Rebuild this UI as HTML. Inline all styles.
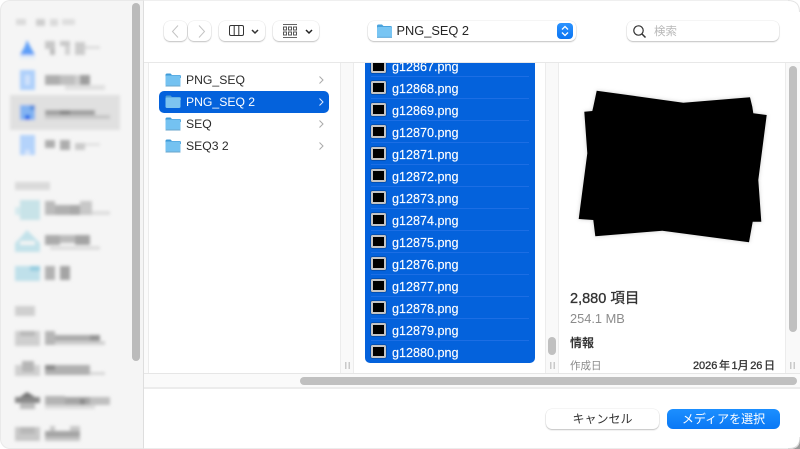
<!DOCTYPE html>
<html lang="ja"><head><meta charset="utf-8"><style>
html,body{margin:0;padding:0;background:#fff}
body{width:800px;height:449px;overflow:hidden;position:relative;font-family:"Liberation Sans","Noto Sans CJK JP",sans-serif;color:#2b2b2b}
.a{position:absolute}
.t{position:absolute;white-space:nowrap;line-height:16px;font-size:12px}
.btn{position:absolute;background:#fff;border-radius:6px;box-shadow:0 0 0 .5px rgba(0,0,0,.07),0 1px 1.5px rgba(0,0,0,.22)}
.f{position:absolute;left:371px;width:15px;height:13px;box-sizing:border-box;background:#000;border:2px solid #c4c4c4;border-radius:1.5px;box-shadow:0 0 0 .5px rgba(0,0,0,.4)}
.n{position:absolute;left:392px;color:#fff;font-size:12.6px;line-height:16px;white-space:nowrap;-webkit-text-stroke:.15px #fff}
.s{position:absolute;left:371px;width:158px;height:1px;background:#1c6ee4}
</style></head><body>
<div class="a" style="left:0;top:0;width:144px;height:449px;background:#f5f5f5;border-radius:10px 0 0 10px;box-sizing:border-box;border:1px solid #e9e9e9;border-right:1px solid #dedede"></div>

<svg class="a" style="left:0;top:0" width="132" height="449" viewBox="0 0 132 449">
<defs><filter id="b" x="-5%" y="-5%" width="110%" height="110%"><feGaussianBlur stdDeviation="1.6"/></filter></defs>
<g filter="url(#b)">
<rect x="10" y="95" width="110" height="35" fill="#e0e0e0"/>
<g fill="#dadada"><rect x="16" y="19" width="10" height="6"/><rect x="36" y="19" width="9" height="7" fill="#cecece"/><rect x="50" y="19" width="8" height="7"/><rect x="62" y="19" width="13" height="6" fill="#dedede"/></g>
<path d="M27 40l3 6 5 9H20l5-9z" fill="#5e9ff8"/><rect x="20" y="55" width="15" height="4" fill="#e3edf8"/>
<g fill="#c8c8c8"><rect x="45" y="41" width="10" height="8"/><rect x="50" y="49" width="5" height="6" fill="#bdbdbd"/><rect x="60" y="41" width="10" height="5"/><rect x="65" y="46" width="5" height="9" fill="#d2d2d2"/><rect x="75" y="42" width="10" height="13" fill="#cccccc"/><rect x="85" y="46" width="15" height="3" fill="#dddddd"/></g>
<rect x="20" y="70" width="15" height="20" fill="#aed0fb"/><rect x="25" y="75" width="5" height="10" fill="#d0e2fb"/>
<g fill="#aeaeae"><rect x="45" y="75" width="15" height="10"/><rect x="60" y="75" width="15" height="10" fill="#bfbfbf"/><rect x="75" y="75" width="5" height="10" fill="#d0d0d0"/><rect x="80" y="75" width="10" height="10" fill="#9e9e9e"/><rect x="65" y="85" width="40" height="5" fill="#e0e0e0"/></g>
<rect x="20" y="105" width="15" height="15" fill="#82b3f2"/><rect x="25" y="115" width="5" height="5" fill="#0e6bea"/><rect x="30" y="105" width="5" height="5" fill="#5690de"/>
<g fill="#a0a0a0"><rect x="45" y="110" width="50" height="5"/><rect x="60" y="110" width="10" height="5" fill="#888"/><rect x="45" y="115" width="65" height="4" fill="#c6c6c6"/></g>
<rect x="20" y="135" width="15" height="20" fill="#b4d3fb"/><rect x="25" y="150" width="5" height="5" fill="#d6e5fb"/>
<g fill="#adadad"><rect x="45" y="140" width="10" height="8"/><rect x="60" y="140" width="10" height="10"/><rect x="75" y="143" width="10" height="7" fill="#cacaca"/><rect x="85" y="143" width="15" height="3" fill="#e2e2e2"/></g>
<rect x="15" y="182" width="35" height="8" fill="#dadada"/>
<rect x="20" y="200" width="20" height="20" fill="#c8e3e8"/><rect x="15" y="207" width="5" height="8" fill="#d6eaee"/>
<g fill="#bbb"><rect x="45" y="201" width="10" height="14"/><rect x="55" y="205" width="15" height="10" fill="#b0b0b0"/><rect x="70" y="205" width="10" height="10" fill="#a9a9a9"/><rect x="80" y="201" width="12" height="14" fill="#c8c8c8"/><rect x="92" y="211" width="18" height="4" fill="#dedede"/></g>
<path d="M27 230l8 8 5 5v9H15v-9l5-5zM20 241v4h15v-4z" fill="#c3e2ea" fill-rule="evenodd"/>
<g fill="#ababab"><rect x="45" y="235" width="15" height="10"/><rect x="60" y="235" width="15" height="8" fill="#bbb"/><rect x="75" y="235" width="15" height="10" fill="#a4a4a4"/><rect x="50" y="246" width="50" height="4" fill="#dedede"/></g>
<rect x="15" y="266" width="25" height="15" fill="#bfe0ea"/><rect x="30" y="266" width="10" height="5" fill="#97cde0"/>
<g fill="#b2b2b2"><rect x="45" y="266" width="10" height="14"/><rect x="60" y="266" width="10" height="14" fill="#a4a4a4"/></g>
<rect x="15" y="306" width="20" height="10" fill="#d0d0d0"/>
<rect x="15" y="331" width="25" height="15" fill="#cfcfcf"/><rect x="20" y="331" width="15" height="5" fill="#b8b8b8"/>
<g fill="#b6b6b6"><rect x="45" y="331" width="10" height="14"/><rect x="55" y="335" width="45" height="6" fill="#ababab"/><rect x="90" y="335" width="10" height="6" fill="#949494"/><rect x="55" y="341" width="50" height="4" fill="#d0d0d0"/></g>
<rect x="15" y="365" width="25" height="11" fill="#d0d0d0"/><rect x="22" y="361" width="12" height="11" fill="#b6b6b6"/>
<g fill="#b0b0b0"><rect x="45" y="365" width="45" height="10"/><rect x="45" y="365" width="10" height="5" fill="#8a8a8a"/><rect x="90" y="372" width="15" height="3" fill="#d6d6d6"/></g>
<rect x="15" y="397" width="25" height="6" fill="#8a8a8a"/><path d="M20 397l7-5 8 5z" fill="#727272"/><rect x="20" y="403" width="15" height="6" fill="#bbb"/>
<g fill="#b4b4b4"><rect x="45" y="396" width="20" height="9"/><rect x="65" y="397" width="25" height="8" fill="#a6a6a6"/><rect x="80" y="399" width="5" height="6" fill="#8a8a8a"/><rect x="90" y="397" width="20" height="8" fill="#bfbfbf"/><rect x="45" y="405" width="50" height="4" fill="#dcdcdc"/></g>
<rect x="15" y="427" width="25" height="14" fill="#c8c8c8"/><rect x="20" y="427" width="15" height="7" fill="#b8b8b8"/>
<g fill="#a4a4a4"><rect x="45" y="431" width="35" height="6"/><rect x="50" y="426" width="5" height="5" fill="#c8c8c8"/><rect x="70" y="426" width="10" height="5" fill="#c8c8c8"/><rect x="45" y="437" width="35" height="4" fill="#c4c4c4"/></g>
</g></svg>

<div class="a" style="left:132px;top:3px;width:8px;height:358px;background:#bbb;border-radius:4px"></div>

<div class="a" style="left:144px;top:0;width:646px;height:1px;background:#efefef"></div>
<div class="a" style="left:144px;top:62px;width:656px;height:1px;background:#e8e8e8"></div>
<div class="a" style="left:144px;top:63px;width:4px;height:310px;background:#fbfbfb"></div>
<div class="a" style="left:148px;top:63px;width:1px;height:310px;background:#ececec"></div>
<div class="a" style="left:340px;top:63px;width:14px;height:310px;background:#f9f9f9;border-left:1px solid #ececec;border-right:1px solid #ececec;box-sizing:border-box"></div>
<div class="a" style="left:545px;top:63px;width:14px;height:310px;background:#f9f9f9;border-left:1px solid #ececec;border-right:1px solid #ececec;box-sizing:border-box"></div>
<div class="a" style="left:785px;top:63px;width:15px;height:310px;background:#f9f9f9;border-left:1px solid #ececec;box-sizing:border-box"></div>

<!-- toolbar -->
<div class="btn" style="left:164px;top:21px;width:23px;height:20px"></div>
<div class="btn" style="left:188px;top:21px;width:23px;height:20px"></div>
<svg class="a" style="left:164px;top:21px" width="48" height="20" fill="none" stroke="#c4c4c4" stroke-width="1"><path d="M14 4.500L8.500 10.500 14 16.500"/><path d="M35 4.500L40.500 10.500 35 16.500"/></svg>
<div class="btn" style="left:219px;top:21px;width:46px;height:20px"></div>
<svg class="a" style="left:219px;top:21px" width="46" height="20" fill="none" stroke="#333" stroke-width="1"><rect x="10.500" y="4.500" width="14" height="10" rx="1.500"/><path d="M15.200 5v9M19.800 5v9"/><path d="M33 9l3 3 3-3" stroke-width="1.500"/></svg>
<div class="btn" style="left:273px;top:21px;width:46px;height:20px"></div>
<svg class="a" style="left:273px;top:21px" width="46" height="20" fill="none" stroke="#555" stroke-width="1"><path d="M10 3.500h14M10 16.500h14" stroke="#666"/><rect x="10.500" y="6" width="3" height="3"/><rect x="15.500" y="6" width="3" height="3"/><rect x="20.500" y="6" width="3" height="3"/><rect x="10.500" y="11" width="3" height="3"/><rect x="15.500" y="11" width="3" height="3"/><rect x="20.500" y="11" width="3" height="3"/><path d="M33 9l3 3 3-3" stroke="#222" stroke-width="1.500"/></svg>

<div class="btn" style="left:368px;top:21px;width:208px;height:20px"></div>
<svg class="a" style="left:377px;top:24px" width="15" height="14"><path d="M0 2q0-1.500 1.500-1.500h3.500l1.500 1.500h7q1.500 0 1.500 1.500V5H0z" fill="#4aa3dd"/><rect x="0" y="3" width="15" height="10.500" rx="1.200" fill="#78c5f3"/><rect x="0" y="12.800" width="15" height="1" fill="#55a5d8"/></svg>
<div class="t" style="left:396.500px;top:23px;font-size:12.800px;color:#262626">PNG_SEQ 2</div>
<div class="a" style="left:557px;top:23px;width:16px;height:16px;border-radius:4px;background:linear-gradient(#2b93ff,#0a74f2)"></div>
<svg class="a" style="left:557px;top:23px" width="16" height="16" fill="none" stroke="#fff" stroke-width="1.300"><path d="M5 6.500l3-3 3 3M5 9.500l3 3 3-3"/></svg>

<div class="btn" style="left:627px;top:21px;width:152px;height:20px"></div>
<svg class="a" style="left:632px;top:24px" width="15" height="15" fill="none" stroke="#333" stroke-width="1.200"><circle cx="6.500" cy="6.500" r="4.700"/><path d="M10 10l3.500 3.500" stroke-width="1.500"/></svg>
<div class="t" style="left:654px;top:24px;font-size:11.500px;color:#b8b8b8">検索</div>

<!-- sidebar column folders -->
<div class="a" style="left:159px;top:91px;width:170px;height:22px;border-radius:5px;background:#0462dc"></div>
<svg class="a" style="left:165px;top:73px" width="16" height="80">
<g><path d="M.5 2q0-1.500 1.500-1.500h3.500l1.500 1.500h7.500q1.500 0 1.500 1.500V5H.5z" fill="#3f9bd8"/><rect x=".5" y="2.500" width="15" height="10.500" rx="1.200" fill="#74c2f1"/><rect x=".5" y="12.500" width="15" height="1" fill="#6aa6cb"/></g>
<g transform="translate(0 22)"><path d="M.5 2q0-1.500 1.500-1.500h3.500l1.500 1.500h7.500q1.500 0 1.500 1.500V5H.5z" fill="#4a9bd6"/><rect x=".5" y="2.500" width="15" height="10.500" rx="1.200" fill="#7cc4f0"/></g>
<g transform="translate(0 44)"><path d="M.5 2q0-1.500 1.500-1.500h3.500l1.500 1.500h7.500q1.500 0 1.500 1.500V5H.5z" fill="#3f9bd8"/><rect x=".5" y="2.500" width="15" height="10.500" rx="1.200" fill="#74c2f1"/><rect x=".5" y="12.500" width="15" height="1" fill="#6aa6cb"/></g>
<g transform="translate(0 66)"><path d="M.5 2q0-1.500 1.500-1.500h3.500l1.500 1.500h7.500q1.500 0 1.500 1.500V5H.5z" fill="#3f9bd8"/><rect x=".5" y="2.500" width="15" height="10.500" rx="1.200" fill="#74c2f1"/><rect x=".5" y="12.500" width="15" height="1" fill="#6aa6cb"/></g>
</svg>
<div class="t" style="left:186px;top:72px;font-size:12.200px">PNG_SEQ</div>
<div class="t" style="left:186px;top:94px;color:#fff;font-size:12.200px">PNG_SEQ 2</div>
<div class="t" style="left:186px;top:116px;font-size:12.200px">SEQ</div>
<div class="t" style="left:186px;top:138px;font-size:12.200px">SEQ3 2</div>
<svg class="a" style="left:318px;top:74px" width="8" height="78" fill="none" stroke="#aaa" stroke-width="1"><path d="M1.500 2.500l3.500 3.500-3.500 3.500"/><path d="M1.500 24.500l3.500 3.500-3.500 3.500" stroke="#dfeaff"/><path d="M1.500 46.500l3.500 3.500-3.500 3.500"/><path d="M1.500 68.500l3.500 3.500-3.500 3.500"/></svg>

<!-- files -->
<div class="a" style="left:365px;top:63px;width:170px;height:300px;background:#0462dc;border-radius:0 0 5px 5px;overflow:hidden"></div>
<div class="s" style="top:76px"></div><div class="s" style="top:98px"></div><div class="s" style="top:120px"></div><div class="s" style="top:142px"></div><div class="s" style="top:164px"></div><div class="s" style="top:186px"></div><div class="s" style="top:208px"></div><div class="s" style="top:230px"></div><div class="s" style="top:252px"></div><div class="s" style="top:274px"></div><div class="s" style="top:296px"></div><div class="s" style="top:318px"></div><div class="s" style="top:340px"></div>
<div class="a" style="left:0;top:63px;width:800px;height:12px;overflow:hidden">
<div class="f" style="top:-3px"></div><div class="n" style="top:-4px">g12867.png</div></div>
<div class="f" style="top:81px"></div><div class="n" style="top:80.500px">g12868.png</div>
<div class="f" style="top:103px"></div><div class="n" style="top:102.500px">g12869.png</div>
<div class="f" style="top:125px"></div><div class="n" style="top:124.500px">g12870.png</div>
<div class="f" style="top:147px"></div><div class="n" style="top:146.500px">g12871.png</div>
<div class="f" style="top:169px"></div><div class="n" style="top:168.500px">g12872.png</div>
<div class="f" style="top:191px"></div><div class="n" style="top:190.500px">g12873.png</div>
<div class="f" style="top:213px"></div><div class="n" style="top:212.500px">g12874.png</div>
<div class="f" style="top:235px"></div><div class="n" style="top:234.500px">g12875.png</div>
<div class="f" style="top:257px"></div><div class="n" style="top:256.500px">g12876.png</div>
<div class="f" style="top:279px"></div><div class="n" style="top:278.500px">g12877.png</div>
<div class="f" style="top:301px"></div><div class="n" style="top:300.500px">g12878.png</div>
<div class="f" style="top:323px"></div><div class="n" style="top:322.500px">g12879.png</div>
<div class="f" style="top:345px"></div><div class="n" style="top:344.500px">g12880.png</div>

<div class="a" style="left:548px;top:337px;width:8px;height:18px;background:#c0c0c0;border-radius:4px"></div>
<svg class="a" style="left:340px;top:360px" width="460" height="12" fill="#c9c9c9"><rect x="5" y="2" width="1.500" height="7"/><rect x="8.500" y="2" width="1.500" height="7"/><rect x="210" y="2" width="1.500" height="7"/><rect x="213.500" y="2" width="1.500" height="7"/><rect x="450" y="2" width="1.500" height="7"/><rect x="453.500" y="2" width="1.500" height="7"/></svg>

<!-- preview -->
<svg class="a" style="left:570px;top:85px;overflow:visible" width="205" height="165"><g transform="translate(-570 -85)"><path d="M596.700 90.700L683.300 102.700 750 97.300 752.300 106.700 753.300 113.300 766.700 115 758.300 180 761.300 221.700 752.700 221.700 749 242.300 662.300 230.700 595.300 236.300 593.300 220 578.700 219 587.300 153.300 584.300 111.700 592.300 111 593.300 106.700z" fill="#000" style="filter:drop-shadow(0 0 2px rgba(0,0,0,.18))"/></g></svg>
<div class="a" style="left:789px;top:66px;width:8px;height:266px;background:#c0c0c0;border-radius:4px"></div>
<div class="t" style="left:570px;top:291px;font-size:14.500px;color:#333;-webkit-text-stroke:.3px #333">2,880 項目</div>
<div class="t" style="left:570px;top:311px;font-size:12.800px;color:#8c8c8c">254.1 MB</div>
<div class="t" style="left:570px;top:335px;font-size:12px;font-weight:bold;color:#333">情報</div>
<div class="t" style="left:570px;top:358px;font-size:10.500px;color:#8a8a8a">作成日</div>
<div class="t" style="right:25px;top:358px;font-size:11px;color:#333;-webkit-text-stroke:.3px #333;word-spacing:-1.500px">2026 年 1月 26 日</div>

<!-- bottom -->
<div class="a" style="left:144px;top:373px;width:656px;height:1px;background:#e6e6e6"></div>
<div class="a" style="left:144px;top:374px;width:656px;height:13px;background:#fafafa"></div>
<div class="a" style="left:144px;top:387px;width:656px;height:2px;background:#ececec"></div>
<div class="a" style="left:300px;top:377px;width:497px;height:8px;background:#c0c0c0;border-radius:4px"></div>
<div class="btn" style="left:546px;top:409px;width:113px;height:20px"></div>
<div class="t" style="left:546px;top:411px;width:113px;text-align:center;font-size:12px;color:#333">キャンセル</div>
<div class="a" style="left:667px;top:409px;width:113px;height:20px;border-radius:6px;background:linear-gradient(#1c8fff,#0a78f5)"></div>
<div class="t" style="left:667px;top:411px;width:113px;text-align:center;font-size:12px;color:#fff">メディアを選択</div>
<div class="a" style="left:144px;top:448px;width:646px;height:1px;background:#ececec"></div>
<svg class="a" style="left:788px;top:437px" width="12" height="12" fill="none"><path d="M12 0Q12 12 0 11.500" stroke="#d8d8d8"/><path d="M12 2Q12 12 2 12H12z" fill="#9a9a9a"/></svg>
<svg class="a" style="left:788px;top:0" width="12" height="12" fill="none"><path d="M0 .5Q11.500 .5 11.500 12" stroke="#e4e4e4"/></svg>
</body></html>
